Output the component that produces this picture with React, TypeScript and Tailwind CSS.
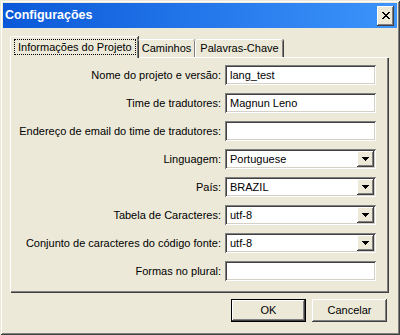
import React from 'react';

const raised =
  'shadow-[inset_-1px_-1px_#404040,inset_1px_1px_#ffffff,inset_-2px_-2px_#808080,inset_2px_2px_#ECE9D8]';
const sunken =
  'shadow-[inset_1px_1px_#808080,inset_-1px_-1px_#ffffff,inset_2px_2px_#404040,inset_-2px_-2px_#D4D0C8]';

const CloseGlyph = () => (
  <svg width="8" height="7" viewBox="0 0 8 7" shapeRendering="crispEdges">
    <path
      d="M0 0h2v1h-2zM6 0h2v1h-2zM1 1h2v1h-2zM5 1h2v1h-2zM2 2h4v1h-4zM3 3h2v1h-2zM2 4h4v1h-4zM1 5h2v1h-2zM5 5h2v1h-2zM0 6h2v1h-2zM6 6h2v1h-2z"
      fill="#000"
    />
  </svg>
);

const DownArrow = () => (
  <svg width="7" height="4" viewBox="0 0 7 4" shapeRendering="crispEdges">
    <path d="M0 0h7v1h-1v1h-1v1h-1v1h-1v-1h-1v-1h-1v-1h-1z" fill="#000" />
  </svg>
);

type Field = { label: string; value: string; combo?: boolean };

const fields: Field[] = [
  { label: 'Nome do projeto e versão:', value: 'lang_test' },
  { label: 'Time de tradutores:', value: 'Magnun Leno' },
  { label: 'Endereço de email do time de tradutores:', value: '' },
  { label: 'Linguagem:', value: 'Portuguese', combo: true },
  { label: 'País:', value: 'BRAZIL', combo: true },
  { label: 'Tabela de Caracteres:', value: 'utf-8', combo: true },
  { label: 'Conjunto de caracteres do código fonte:', value: 'utf-8', combo: true },
  { label: 'Formas no plural:', value: '' },
];

const Row = ({ field }: { field: Field }) => (
  <div className="flex items-center h-[20px] mb-[8px]">
    <div className="w-[210px] text-right whitespace-nowrap">{field.label}</div>
    <div className={`ml-[4px] w-[151px] h-[20px] bg-white relative flex items-center pl-[5px] ${sunken}`}>
      <span className="whitespace-nowrap">{field.value}</span>
      {field.combo && (
        <div
          className={`absolute right-[2px] top-[2px] w-[17px] h-[16px] bg-[#ECE9D8] flex items-center justify-center ${raised}`}
        >
          <DownArrow />
        </div>
      )}
    </div>
  </div>
);

export default function App() {
  return (
    <div
      className="w-[400px] h-[335px] bg-[#ECE9D8] p-[3px] flex flex-col text-[11px] text-black font-['Liberation_Sans',Arial,sans-serif] shadow-[inset_1px_1px_#ECE9D8,inset_-1px_-1px_#404040,inset_2px_2px_#ffffff,inset_-2px_-2px_#808080]"
    >
      {/* title bar */}
      <div className="h-[25px] bg-gradient-to-r from-[#0a58d8] to-[#3d94fb] flex items-center justify-between pl-[2px] pr-[3px]">
        <span className="text-white font-bold text-[12.5px]">Configurações</span>
        <div className={`w-[17px] h-[20px] bg-[#ECE9D8] flex items-center justify-center ${raised}`}>
          <CloseGlyph />
        </div>
      </div>

      {/* tabs */}
      <div className="mt-[8px] ml-[7px] flex items-end h-[21px] relative z-10">
        <div className="w-[128px] h-[22px] -mb-[1px] bg-[#ECE9D8] border-t border-l border-white rounded-tl-[2px] shadow-[inset_-1px_0_#808080,1px_0_#404040] pt-[2px] pl-[3px]">
          <div className="inline-block border border-dotted border-black px-[3px] leading-[14px]">
            Informações do Projeto
          </div>
        </div>
        <div className="w-[57px] h-[18px] border-t border-white rounded-t-[2px] shadow-[inset_-1px_0_#808080,1px_0_#404040] flex items-center justify-center">
          Caminhos
        </div>
        <div className="w-[88px] h-[18px] border-t border-l border-white rounded-t-[2px] shadow-[inset_-1px_0_#808080,1px_0_#404040] flex items-center justify-center">
          Palavras-Chave
        </div>
      </div>

      {/* panel */}
      <div className="ml-[7px] w-[378px] h-[235px] border-t border-l border-white shadow-[inset_-1px_-1px_#808080,1px_1px_#404040] pt-[7px]">
        {fields.map((f) => (
          <Row key={f.label} field={f} />
        ))}
      </div>

      {/* buttons */}
      <div className="mt-[7px] flex justify-end gap-[6px] pr-[10px]">
        <div className="w-[75px] h-[23px] border border-black">
          <div className={`w-full h-full flex items-center justify-center ${raised}`}>OK</div>
        </div>
        <div className={`w-[75px] h-[23px] flex items-center justify-center ${raised}`}>Cancelar</div>
      </div>
    </div>
  );
}
